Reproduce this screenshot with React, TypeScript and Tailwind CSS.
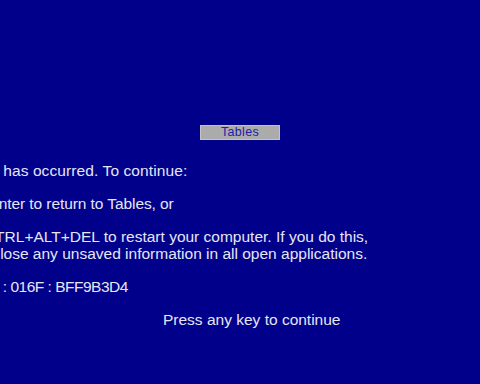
export default function App() {
  return (
    <div className="h-[384px] w-[480px] overflow-hidden bg-[#00008b] text-[#e6e6f2] font-['Liberation_Sans',Arial,sans-serif]">
      <div className="pt-[125px] flex justify-center">
        <div className="w-[80px] h-[15px] bg-[#ababab] border border-[#c4c4c4] flex items-center justify-center text-[12.5px] leading-none tracking-[0.3px] text-[#1c1ca8]">
          Tables
        </div>
      </div>
      <div className="ml-[-54px] mt-[23px] w-[600px] text-[15.5px] leading-[16.5px]">
        <p className="ml-[-4px] tracking-[0.1px]">An error has occurred. To continue:</p>
        <p className="mt-[16.5px] ml-[-1px] tracking-[-0.08px]">Press Enter to return to Tables, or</p>
        <p className="mt-[16.5px]">
          <span className="ml-[-6px]">Press CTRL+ALT+DEL to restart your computer. If you do this,</span>
          <br />
          <span className="ml-[-1px]">you will lose any unsaved information in all open applications.</span>
        </p>
        <p className="mt-[16.5px] ml-[-9px]">
          Error: 0E<span className="tracking-[-0.5px]"> : 016F : BFF9B3D4</span>
        </p>
        <p className="mt-[16.5px] pl-[217px]">Press any key to continue</p>
      </div>
    </div>
  );
}
